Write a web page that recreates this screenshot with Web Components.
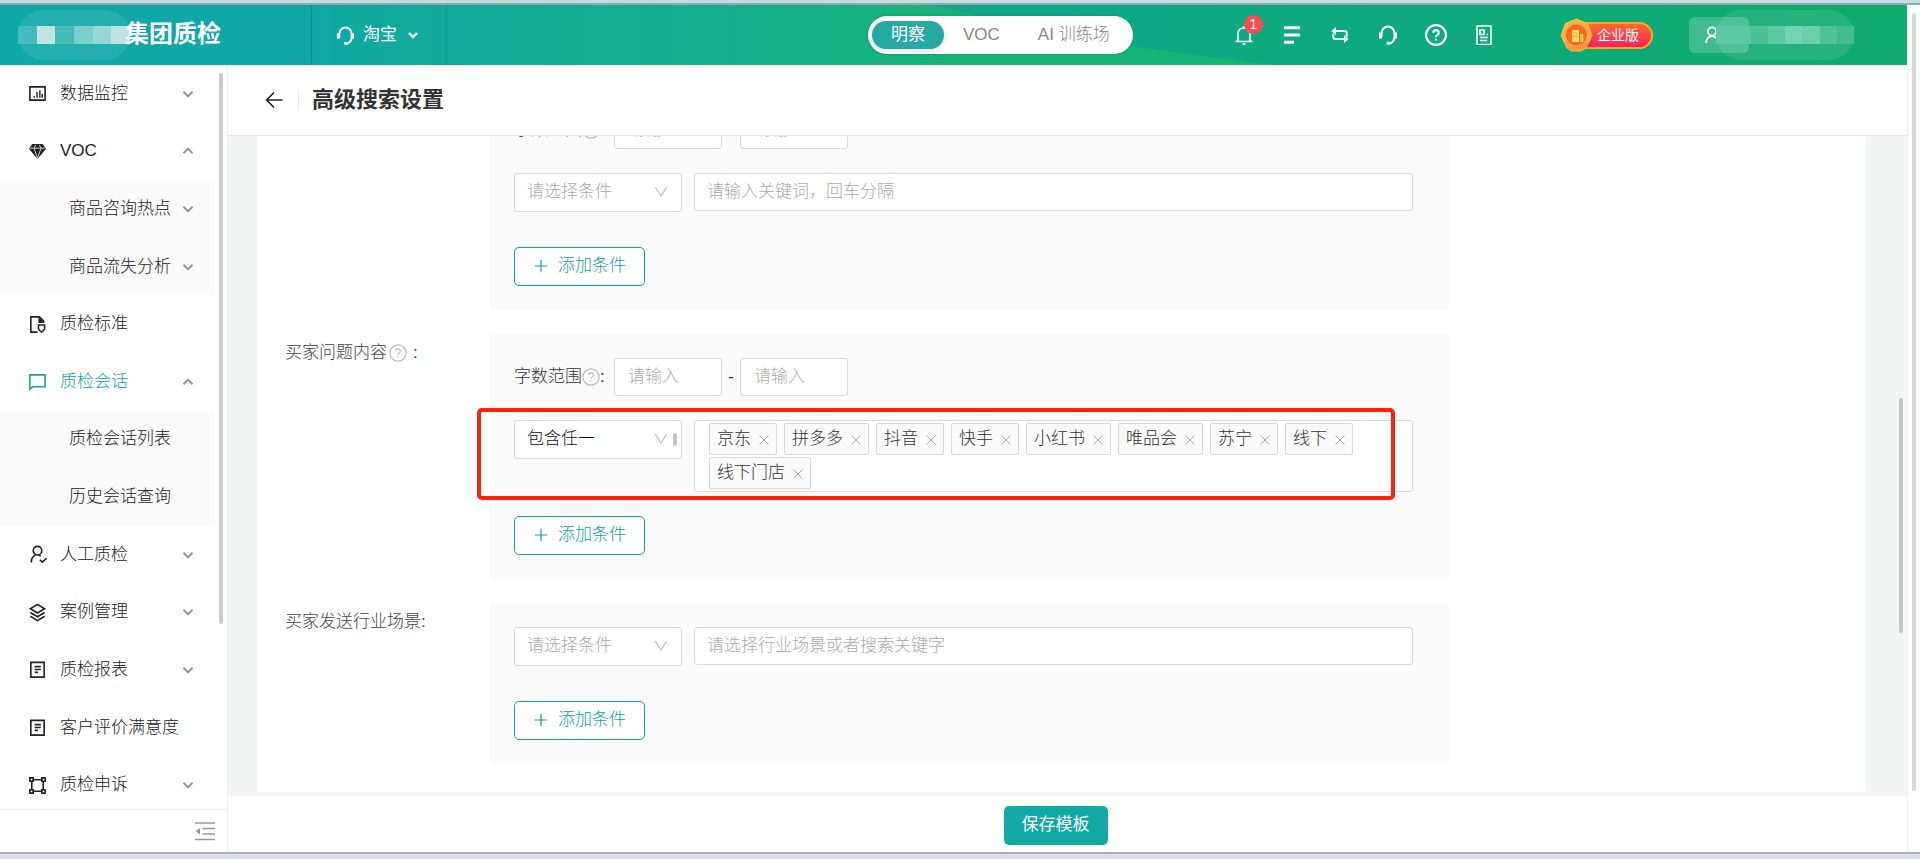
<!DOCTYPE html>
<html lang="zh-CN">
<head>
<meta charset="utf-8">
<meta name="viewport" content="width=device-width, initial-scale=1">
<title>高级搜索设置</title>
<style>
html, body { margin: 0; height: 100%; }
body { font: 300 17px/26px "Liberation Sans", "Noto Sans CJK SC", sans-serif; color: #222; background: #fff; overflow: hidden; }
</style>
</head>
<body>
<qc-app></qc-app>

<script>
function define(name, html, setup) {
  const tpl = document.createElement('template');
  tpl.innerHTML = '<style>*{box-sizing:border-box}button,input,select{font:inherit;color:inherit;margin:0}button{cursor:pointer}a{color:inherit;text-decoration:none}</style>' + html;
  customElements.define(name, class extends HTMLElement {
    constructor() {
      super();
      this.attachShadow({ mode: 'open' }).append(tpl.content.cloneNode(true));
    }
    connectedCallback() { if (setup) setup(this, this.shadowRoot); }
  });
}

/* Icons: stroke icons drawn on a 20 x 20 grid */
const ICONS = {
  chart: '<path d="M2 3h16v14H2z"/><path d="M6.500 14.500v-2M9.500 14.500V8.500M12.500 14.500V6.500M15 14.500v-4" stroke-width="1.500"/>',
  gem: '<path fill="currentColor" stroke="none" d="M4.500 2h11L19 7l-9 11L1 7z"/><path stroke="#fff" stroke-width=".8" d="M2 6.500h16M6.500 7 10 17M13.500 7 10 17M6.500 6.500 8 3M13.500 6.500 12 3"/>',
  fileShield: '<path d="M10 18H3V2h9l4.500 4.500v1.500"/><path fill="currentColor" stroke="none" d="M11 2 17.500 8.500H11z"/><path d="M11 10.500h6.500v4q-1 2.300-3.200 3.500-2.300-1.200-3.300-3.500z"/>',
  chat: '<path d="M2 3h16v12.500H5L2 18z"/>',
  userCheck: '<circle cx="10" cy="6" r="4.500"/><path d="M8 10.500Q3.500 12 3.500 18.500M12.500 15.500l2.500 2.500 4.500-4M11 10.800l2.500.8"/>',
  layers: '<path d="m10 1.500 7.500 4.500L10 10.500 2.500 6zM2.500 10l7.500 4.500 7.500-4.500M2.500 14l7.500 4.500 7.500-4.500"/>',
  report: '<path d="M3 2.500h14v15.500H3zM7 7h6.500M7 10h6.500M7 13h3.500"/>',
  frame: '<path d="M5 4h10M5 16h10M4 5v10M16 5v10"/><path d="M2 2h3.500v3.500H2zM14.500 2H18v3.500h-3.500zM2 14.500h3.500V18H2zM14.500 14.500H18V18h-3.500z"/>',
  down: '<path d="m5 7.500 5 5 5-5"/>',
  up: '<path d="m5 12.500 5-5 5 5"/>',
  caret: '<path d="m3 4 7 11 7-11"/>',
  fold: '<path d="M0 2h20M7.500 7.500H20M7.500 13H20M0 18.500h20"/><path fill="currentColor" stroke="none" d="M5 7v6.500L.5 10.200z"/>',
  back: '<path d="M18.500 10h-16M10 2.500 2.500 10l7.500 7.500"/>',
  help: '<circle cx="10" cy="10" r="9"/><path d="M7.500 8q0-2.500 2.500-2.500T12.500 8q0 1.200-1.300 2-1.200.7-1.200 2M10 13.500V15"/>',
  plus: '<path d="M3 10h14M10 3v14"/>',
  close: '<path d="m1 1 18 18M19 1 1 19"/>',
  headset: '<path d="M3.500 12V8.500a6.500 7 0 0 1 13 0v3.500Q16 17.500 11.500 18.500"/><path stroke-width="3" d="M2.500 7.500v6M17.500 7.500v6M8.500 18.300h3.500"/>',
  bell: '<path d="M4 16V9q0-6 6-6t6 6v7M1.500 16.500h17M10 1v2M8.500 19h3"/>',
  list: '<path stroke-width="3.200" d="M1 2h18M1 10h18M1 18h11"/>',
  swap: '<path d="M2 5.500h13q2.500 0 2.500 2.500v4M18 14.500H5q-2.500 0-2.500-2.500V8.500"/><path fill="currentColor" stroke="none" d="M5.500 1v9L.5 5.500zM14.500 10v9l5-4.500z"/>',
  doc: '<path d="M3 1h14v18.500H3zM6 5h4v4.500H6zM12.500 9.500H14M6 12.500h8M6 15.500h7"/>',
  user: '<circle cx="10" cy="6" r="4.500"/><path d="M3.500 19q0-7.500 6.500-7.500t6.500 7.500"/>'
};
customElements.define('qc-icon', class extends HTMLElement {
  constructor() {
    super();
    this.attachShadow({ mode: 'open' });
  }
  connectedCallback() {
    const size = this.getAttribute('size') || 20, w = this.getAttribute('weight') || 2;
    this.shadowRoot.innerHTML = `<style>:host{display:inline-flex;flex:none}svg{display:block}</style>
      <svg width="${size}" height="${size}" viewBox="0 0 20 20" fill="none" stroke="currentColor" stroke-width="${w}" aria-hidden="true">${ICONS[this.getAttribute('name')]}</svg>`;
  }
});

/* Pixelated cover over private names */
define('qc-mosaic', `
<style>
:host { display: block; height: 50px; border-radius: 26px; background: rgba(255,255,255,.09); padding-top: 16px; }
div { display: flex; height: 18px; }
i { flex: 1; }
</style><div></div>`, (el, root) => {
  root.querySelector('div').innerHTML = el.getAttribute('cells').split(' ').map(c => `<i style="background:${c}"></i>`).join('');
});

define('qc-header', `
<style>
:host { display: block; flex: none; color: #fff; }
header { display: flex; align-items: center; height: 60px; position: relative; background: linear-gradient(90deg, #0fa8a8 0%, #0fa8a6 15%, #12ab97 25%, #13ae8a 38%, #16b478 50%, #16b478 100%); }
.wave { position: absolute; inset: 0 0 0 auto; width: 51%; height: 100%; }
.brand { display: flex; align-items: center; width: 311px; height: 100%; padding-left: 18px; position: relative; }
.brand qc-mosaic { width: 112px; }
h1 { font-size: 24px; line-height: 30px; margin: 0 0 2px -5px; font-weight: 700; }
.shop { display: flex; align-items: center; gap: 8px; width: 136px; height: 100%; padding: 0 0 0 24px; background: none; border: solid rgba(10,120,130,.4); border-width: 0 1px; font-weight: 400; }
.tabs { position: absolute; left: 868px; top: 11px; display: flex; align-items: center; height: 38px; padding: 0 4px; border-radius: 19px; background: #fff; width: 265px; box-shadow: 0 0 3px rgba(0,80,60,.3); color: #888; }
.tabs button { border: 0; background: none; height: 28px; padding: 0 19px; border-radius: 14px; line-height: 28px; }
.tabs button[aria-selected=true] { background: #24a9a5; color: #fff; font-weight: 400; box-shadow: 0 2px 4px rgba(0,0,0,.12); }
.right { margin-left: auto; display: flex; align-items: center; position: relative; padding-right: 53px; }
.tools { display: flex; gap: 28px; margin-right: 66px; }
.tools button { position: relative; display: flex; align-items: center; justify-content: center; border: 0; padding: 0; background: none; width: 20px; height: 22px; }
.count { position: absolute; left: 10px; top: -9px; width: 19px; height: 19px; border-radius: 50%; background: #ff4a4f; font-size: 14px; line-height: 19px; text-align: center; }
.plan { display: flex; align-items: center; margin-right: 36px; }
.plan svg { position: relative; }
.plan b { margin-left: -18px; width: 78px; height: 27px; padding-left: 20px; border: 2px solid #ffa718; border-radius: 14px; background: linear-gradient(#fb6a2c, #fb1e63); font-size: 14px; line-height: 23px; }
.user { display: flex; align-items: center; padding: 0; border: 0; background: none; width: 165px; height: 50px; position: relative; }
.user .box { display: flex; align-items: center; width: 60px; height: 36px; padding-left: 14px; border-radius: 6px; background: rgba(255,255,255,.2); }
.user qc-mosaic { margin-left: -33px; width: 138px; }
</style>
<header>
  <svg class="wave" viewBox="0 0 979 60" preserveAspectRatio="none" aria-hidden="true">
    <defs><linearGradient id="g"><stop offset="0" stop-color="#0da98a"/><stop offset=".4" stop-color="#0eaa80"/><stop offset="1" stop-color="#10ab6e"/></linearGradient></defs>
    <path fill="url(#g)" d="M0 0Q100 27 205 42T345 60H979V0z"/>
  </svg>
  <div class="brand"><qc-mosaic cells="#45bcbb #bfe6e3 #45bcb8 #7acfcd #93d8d6 #bce5e2"></qc-mosaic><h1>集团质检</h1></div>
  <button class="shop"><qc-icon name="headset" size="19"></qc-icon>淘宝<qc-icon name="down" size="16" weight="3"></qc-icon></button>
  <div class="tabs" role="tablist">
    <button role="tab" aria-selected="true">明察</button><button role="tab">VOC</button><button role="tab">AI 训练场</button>
  </div>
  <div class="right">
    <div class="tools">
      <button aria-label="通知"><qc-icon name="bell" weight="1.6"></qc-icon><span class="count">1</span></button>
      <button aria-label="任务"><qc-icon name="list" size="18"></qc-icon></button>
      <button aria-label="切换"><qc-icon name="swap" size="18" weight="2.200"></qc-icon></button>
      <button aria-label="客服"><qc-icon name="headset"></qc-icon></button>
      <button aria-label="帮助"><qc-icon name="help" size="22"></qc-icon></button>
      <button aria-label="文档"><qc-icon name="doc" weight="1.6"></qc-icon></button>
    </div>
    <div class="plan">
      <svg width="33" height="34" viewBox="0 0 33 34" aria-hidden="true"><path d="m16.500 1 11 4.500 4.500 12-6 12.500-5 3h-9l-5-3L1 17.500l4.500-12z" fill="#ffb13d" stroke="#fdc35a"/><path d="M4 24 7 30l5 3h9l5-3 3-6z" fill="#ff8a3a" opacity=".6"/><circle cx="16.500" cy="17" r="11" fill="#ff6a18" stroke="#ffa56a"/><path d="M12 12h7v12h-7z" fill="#ffe06a"/><path d="M20 16h3.500v8H20z" fill="#ffc23a"/><path d="M13.500 15h4M13.500 18h4" stroke="#f7991f"/></svg>
      <b>企业版</b>
    </div>
    <button class="user" aria-label="用户"><span class="box"><qc-icon name="user" size="18"></qc-icon></span><qc-mosaic cells="#5cc9a6 #5cc9a6 #4cc196 #5cc9a4 #74d2b5 #6ccfab #50c29a #42bb90"></qc-mosaic></button>
  </div>
</header>`);

define('qc-menu-item', `
<style>
:host { display: flex; flex: 1; }
a { flex: 1; display: flex; align-items: center; padding: 0 18px 0 28px; color: #222; }
.ico { width: 20px; margin-right: 12px; display: flex; }
.arrow { margin-left: auto; color: #999; display: flex; }
:host([sub]) a { padding-left: 69px; }
:host([sub]) .ico { display: none; }
:host([active]) a { color: #0fa5a2; }
</style>
<a href="#"><span class="ico"></span><slot></slot><span class="arrow"></span></a>`, (el, root) => {
  const i = el.getAttribute('icon'), a = el.getAttribute('arrow');
  if (i) root.querySelector('.ico').innerHTML = `<qc-icon name="${i}" size="19" weight="1.7"></qc-icon>`;
  if (a) root.querySelector('.arrow').innerHTML = `<qc-icon name="${a}" size="18" weight="2.2"></qc-icon>`;
});

define('qc-sidebar', `
<style>
:host { display: flex; flex-direction: column; flex: none; width: 228px; border-right: 1px solid #eee; }
.scroll { flex: 1; min-height: 0; overflow: hidden; display: flex; align-items: flex-start; }
nav { flex: 1; display: flex; flex-direction: column; min-height: 749px; }
.group { display: flex; flex-direction: column; flex: 2; background: #fafafa; }
.thumb { flex: none; width: 4px; height: 551px; margin: 8px 4px 0; border-radius: 2px; background: #ccc; }
footer { flex: none; height: 43px; border-top: 1px solid #eee; display: flex; align-items: center; justify-content: flex-end; padding-right: 12px; }
footer button { border: 0; background: none; padding: 0; color: #999; display: flex; }
</style>
<div class="scroll">
  <nav>
    <qc-menu-item icon="chart" arrow="down">数据监控</qc-menu-item>
    <qc-menu-item icon="gem" arrow="up">VOC</qc-menu-item>
    <div class="group">
      <qc-menu-item sub arrow="down">商品咨询热点</qc-menu-item>
      <qc-menu-item sub arrow="down">商品流失分析</qc-menu-item>
    </div>
    <qc-menu-item icon="fileShield">质检标准</qc-menu-item>
    <qc-menu-item icon="chat" arrow="up" active>质检会话</qc-menu-item>
    <div class="group">
      <qc-menu-item sub>质检会话列表</qc-menu-item>
      <qc-menu-item sub>历史会话查询</qc-menu-item>
    </div>
    <qc-menu-item icon="userCheck" arrow="down">人工质检</qc-menu-item>
    <qc-menu-item icon="layers" arrow="down">案例管理</qc-menu-item>
    <qc-menu-item icon="report" arrow="down">质检报表</qc-menu-item>
    <qc-menu-item icon="report">客户评价满意度</qc-menu-item>
    <qc-menu-item icon="frame" arrow="down">质检申诉</qc-menu-item>
  </nav>
  <div class="thumb"></div>
</div>
<footer><button aria-label="收起菜单"><qc-icon name="fold" weight="1.6"></qc-icon></button></footer>`);

/* Form row: caption on the left, grey panel on the right */
define('qc-field', `
<style>
:host { display: flex; }
.cap { flex: none; width: 205px; padding-top: 6px; color: #444; display: flex; align-items: center; height: 32px; }
.cap qc-icon { color: #bbb; margin: 0 6px 0 2px; }
.panel { flex: 1; max-width: 959px; padding: 24px 36px 24px 24px; background: #fafafa; border-radius: 3px; display: flex; flex-direction: column; align-items: stretch; gap: 24px; }
.add { align-self: flex-start; display: flex; align-items: center; gap: 8px; height: 39px; width: 131px; padding: 0 17px 1px; border: 1px solid #0fa5a2; border-radius: 5px; background: #fff; color: #0fa5a2; }
</style>
<div class="cap"></div>
<div class="panel"><slot></slot><button class="add"><qc-icon name="plus" size="18" weight="1.3"></qc-icon>添加条件</button></div>`, (el, root) => {
  const c = el.getAttribute('caption');
  if (c) root.querySelector('.cap').innerHTML = c + (el.hasAttribute('hint') ? '<qc-icon name="help" size="18" weight="1.3"></qc-icon>' : '') + '<span>:</span>';
});

define('qc-range', `
<style>
:host { display: flex; align-items: center; height: 38px; color: #333; }
qc-icon { color: #bbb; }
.name { display: flex; align-items: center; width: 100px; }
input { width: 108px; height: 38px; padding: 0 13px; border: 1px solid #d9d9d9; border-radius: 3px; background: #fff; outline: 0; }
input::placeholder { color: #aaa; opacity: 1; }
.dash { width: 18px; text-align: center; }
</style>
<label class="name" for="from">字数范围<qc-icon name="help" size="18" weight="1.3"></qc-icon>:</label>
<input id="from" placeholder="请输入"><span class="dash">-</span><input aria-label="字数上限" placeholder="请输入">`);

define('qc-condition', `
<style>
:host { display: flex; align-items: flex-start; gap: 12px; min-height: 50px; position: relative; }
.pick { position: relative; flex: none; width: 168px; }
select { appearance: none; display: block; width: 100%; height: 39px; padding: 0 36px 1px 12px; border: 1px solid #d9d9d9; border-radius: 3px; background: #fff; color: #aaa; outline: 0; }
:host([chosen]) select { color: #111; }
.pick qc-icon { position: absolute; right: 13px; top: 11px; color: #bbb; pointer-events: none; }
.bar { display: none; position: absolute; right: 5px; top: 13px; width: 4px; height: 13px; border-radius: 2px; background: #c4c4c4; }
:host([chosen]) .bar { display: block; }
.value { flex: 1; min-width: 0; }
.mark { display: none; position: absolute; left: -37px; right: 18px; top: -12px; bottom: -8px; border: 4px solid #ff2010; border-radius: 5px; pointer-events: none; }
:host([chosen]) .mark { display: block; }
</style>
<div class="pick"><select aria-label="条件"><option></option></select><qc-icon name="caret" size="16" weight="1.500"></qc-icon><span class="bar"></span></div>
<div class="value"><slot></slot></div>
<div class="mark"></div>`, (el, root) => {
  root.querySelector('option').textContent = el.getAttribute('chosen') || '请选择条件';
});

define('qc-text', `
<style>
:host { display: block; }
input { display: block; width: 100%; height: 38px; padding: 0 12px; border: 1px solid #d9d9d9; border-radius: 3px; background: #fff; outline: 0; }
input::placeholder { color: #aaa; opacity: 1; }
</style><input>`, (el, root) => {
  const i = root.querySelector('input');
  i.placeholder = el.getAttribute('placeholder');
  i.setAttribute('aria-label', i.placeholder);
});

define('qc-tags', `
<style>
:host { display: flex; flex-wrap: wrap; gap: 2px 7px; padding: 2px 40px 2px 14px; border: 1px solid #d9d9d9; border-radius: 3px; background: #fff; }
</style><slot></slot>`);

define('qc-tag', `
<style>
:host { display: flex; align-items: center; height: 32px; padding: 0 7px; border: 1px solid #d9d9d9; border-radius: 2px; background: #fafafa; color: #333; }
button { display: flex; border: 0; background: none; padding: 2px 0 0; margin-left: 8px; color: #aaa; }
</style><slot></slot><button aria-label="移除"><qc-icon name="close" size="10" weight="2"></qc-icon></button>`);

define('qc-app', `
<style>
:host { display: flex; flex-direction: column; height: 100vh; }
.edge-top { flex: none; height: 5px; background: #c5dde1; border-bottom: 2px solid #94a8ae; }
.edge-bottom { flex: none; height: 7px; background: #d8e0ec; border-top: 2px solid #aab2bd; }
.window { flex: 1; min-height: 0; display: flex; }
.app { flex: 1; min-width: 0; display: flex; flex-direction: column; }
.rail { flex: none; width: 13px; border-left: 1px solid #eee; padding: 8px 4px 61px; display: flex; }
.rail i { width: 4px; border-radius: 2px; background: #d9d9d9; }
.body { flex: 1; min-height: 0; display: flex; }
main { flex: 1; min-width: 0; display: flex; flex-direction: column; }
.title { flex: none; height: 71px; border-bottom: 1px solid #e8e8e8; display: flex; align-items: center; padding-left: 36px; }
.title a { display: flex; padding-right: 14px; margin-right: 13px; border-right: 1px solid #e8e8e8; }
h2 { margin: 0; font-size: 22px; line-height: 30px; font-weight: 700; color: #333; }
.scroll { flex: 1; min-height: 0; overflow: hidden; background: #f3f5f5; padding: 0 4px 4px 29px; display: flex; gap: 33px; align-items: stretch; }
.card { flex: 1; background: #fff; overflow: hidden; padding-left: 28px; }
form { display: flex; flex-direction: column; gap: 24px; margin-top: -49px; }
.thumb { flex: none; width: 4px; height: 235px; margin-top: 262px; border-radius: 2px; background: #c4c6c6; }
.save { flex: none; height: 56px; display: flex; justify-content: center; align-items: center; padding: 2px 24px 0 0; }
.save button { height: 39px; padding: 0 18px 1px; border: 0; border-radius: 5px; background: #0fa9a6; color: #fff; font-weight: 400; }
</style>
<div class="edge-top"></div>
<div class="window">
  <div class="app">
    <qc-header></qc-header>
    <div class="body">
      <qc-sidebar></qc-sidebar>
      <main>
        <div class="title"><a href="#" aria-label="返回"><qc-icon name="back" weight="1.600"></qc-icon></a><h2>高级搜索设置</h2></div>
        <div class="scroll">
          <div class="card"><form>
            <qc-field>
              <qc-range></qc-range>
              <qc-condition><qc-text placeholder="请输入关键词，回车分隔"></qc-text></qc-condition>
            </qc-field>
            <qc-field caption="买家问题内容" hint>
              <qc-range></qc-range>
              <qc-condition chosen="包含任一"><qc-tags>
                <qc-tag>京东</qc-tag><qc-tag>拼多多</qc-tag><qc-tag>抖音</qc-tag><qc-tag>快手</qc-tag><qc-tag>小红书</qc-tag><qc-tag>唯品会</qc-tag><qc-tag>苏宁</qc-tag><qc-tag>线下</qc-tag><qc-tag>线下门店</qc-tag>
              </qc-tags></qc-condition>
            </qc-field>
            <qc-field caption="买家发送行业场景">
              <qc-condition><qc-text placeholder="请选择行业场景或者搜索关键字"></qc-text></qc-condition>
            </qc-field>
          </form></div>
          <div class="thumb"></div>
        </div>
        <div class="save"><button>保存模板</button></div>
      </main>
    </div>
  </div>
  <div class="rail"><i></i></div>
</div>
<div class="edge-bottom"></div>`);
</script>
</body>
</html>
